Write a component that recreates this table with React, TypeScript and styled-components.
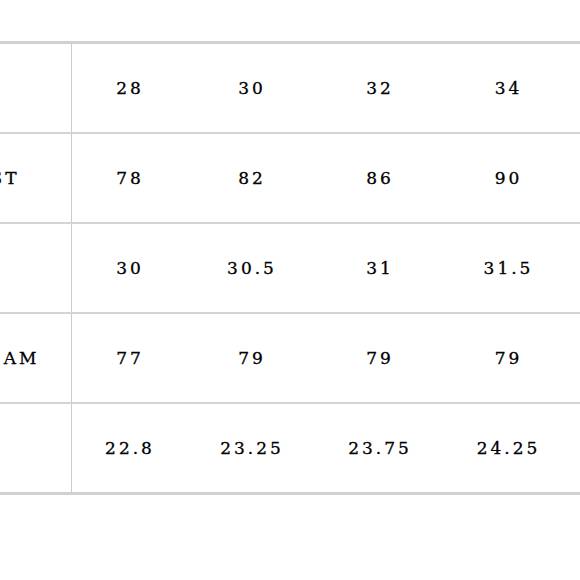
import React from "react";
import styled, { createGlobalStyle } from "styled-components";

const Global = createGlobalStyle`
  html, body {
    margin: 0;
    padding: 0;
    background: #ffffff;
    overflow: hidden;
  }
  body {
    width: 580px;
    height: 580px;
  }
`;

const Page = styled.div`
  padding-top: 41px;
  width: 580px;
  overflow: hidden;
`;

const Table = styled.div`
  margin-left: -80px;
  width: 700px;
  border-top: 3px solid #d0d0d0;
  border-bottom: 3px solid #d0d0d0;
  font-family: "DejaVu Serif", "Liberation Serif", serif;
  font-size: 17px;
  letter-spacing: 3px;
  color: #000000;
  -webkit-text-stroke: 0.3px #000000;
`;

const Row = styled.div<{ $last?: boolean }>`
  display: grid;
  grid-template-columns: 152px 116px 128px 128px 129px 1fr;
  height: 88px;
  border-bottom: ${(p) => (p.$last ? "none" : "2px solid #d4d4d4")};
`;

const LabelCell = styled.div`
  display: flex;
  align-items: center;
  padding-left: 26px;
  border-right: 1px solid #cccccc;
  white-space: nowrap;
`;

const ValueCell = styled.div`
  display: flex;
  align-items: center;
  justify-content: center;
  white-space: nowrap;
`;

const rows: { label: string; values: string[] }[] = [
  { label: "SIZE", values: ["28", "30", "32", "34"] },
  { label: "WAIST", values: ["78", "82", "86", "90"] },
  { label: "HIP", values: ["30", "30.5", "31", "31.5"] },
  { label: "INSEAM", values: ["77", "79", "79", "79"] },
  { label: "HEM", values: ["22.8", "23.25", "23.75", "24.25"] },
];

export default function App() {
  return (
    <>
      <Global />
      <Page>
        <Table>
          {rows.map((r, i) => (
            <Row key={r.label} $last={i === rows.length - 1}>
              <LabelCell>{r.label}</LabelCell>
              {r.values.map((v, j) => (
                <ValueCell key={j}>{v}</ValueCell>
              ))}
              <ValueCell />
            </Row>
          ))}
        </Table>
      </Page>
    </>
  );
}
